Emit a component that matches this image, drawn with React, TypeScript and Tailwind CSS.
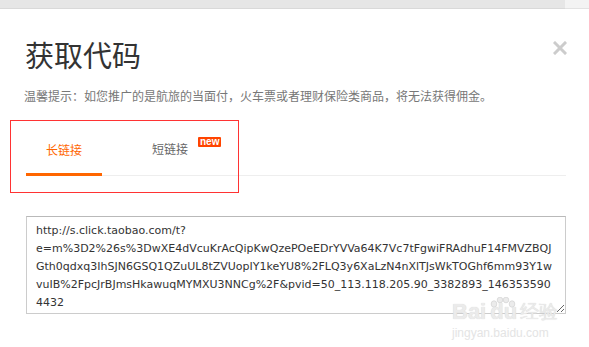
import React from "react";

const url =
  "http://s.click.taobao.com/t?\n" +
  "e=m%3D2%26s%3DwXE4dVcuKrAcQipKwQzePOeEDrYVVa64K7Vc7tFgwiFRAdhuF14FMVZBQJ\n" +
  "Gth0qdxq3IhSJN6GSQ1QZuUL8tZVUopIY1keYU8%2FLQ3y6XaLzN4nXlTJsWkTOGhf6mm93Y1w\n" +
  "vuIB%2FpcJrBJmsHkawuqMYMXU3NNCg%2F&pvid=50_113.118.205.90_3382893_146353590\n" +
  "4432";

const cjk = "font-['Microsoft_YaHei','Noto_Sans_CJK_SC',sans-serif]";

export default function App() {
  return (
    <div className={`relative w-[589px] h-[347px] overflow-hidden bg-white ${cjk}`}>
      {/* browser strip at the top */}
      <div className="flex h-[9px]">
        <div className="flex-1 bg-[#e6e6e6] border-b border-[#d9d9d9]" />
        <div className="w-[24px] bg-[#f3f3f3] border-b border-[#e2e2e2]" />
      </div>

      <div className="pl-[26px] pr-[23px]">
        <div className="relative mt-[31px]">
          <h1 className="text-[29px] leading-[29px] text-[#333] font-normal -ml-[1px]">获取代码</h1>
          <button className="absolute right-[-2px] top-[0px] w-[16px] h-[16px] flex items-center justify-center">
            <svg width="14" height="14" viewBox="0 0 14 14">
              <path d="M2 2 L12 12 M12 2 L2 12" stroke="#cccccc" strokeWidth="3" strokeLinecap="square" />
            </svg>
          </button>
        </div>

        <p className="mt-[21px] text-[12px] leading-[12px] text-[#777] -ml-[2px]">
          温馨提示：如您推广的是航旅的当面付，火车票或者理财保险类商品，将无法获得佣金。
        </p>

        {/* tabs */}
        <div className="mt-[41px] flex items-end border-b border-[#eeeeee]">
          <div className="px-[20px] pb-[17px] border-b-[3px] border-[#ff6600] -mb-[1px] text-[12px] leading-[12px] text-[#ff6600]">
            长链接
          </div>
          <div className="relative ml-[30px] px-[20px] pb-[20px] text-[12px] leading-[12px] text-[#666]">
            短链接
            <span className="absolute left-[66px] top-[-6px] h-[10px] px-[2px] rounded-[1px] bg-[#ff4400] text-white text-[10px] leading-[10px] font-['Liberation_Sans',sans-serif] font-bold">
              new
            </span>
          </div>
        </div>

        <textarea
          readOnly
          value={url}
          className="mt-[40px] block w-[540px] h-[98px] border border-[#cccccc] border-t-[#b9b9b9] pl-[9px] pr-[4px] pt-[5px] text-[11px] leading-[18px] text-[#333] whitespace-pre overflow-hidden font-['Tahoma','DejaVu_Sans',sans-serif] outline-none"
        />
      </div>

      {/* annotation box */}
      <div className="absolute left-[10px] top-[120px] w-[229px] h-[73px] border border-[#ff3333]" />

      {/* watermark */}
      <div className="absolute left-[452px] top-[297px] pointer-events-none select-none">
        <div className="flex items-end gap-[1px] text-[#ebebeb] [text-shadow:0_0_1px_#cfcfcf] font-['Liberation_Sans',sans-serif] font-bold text-[22px] leading-[19px]">
          <span>Bai</span>
          <span className="relative inline-block w-[32px] h-[24px]">
            <svg width="32" height="24" viewBox="0 0 32 24" className="absolute left-0 top-0">
              <ellipse cx="7" cy="7" rx="2.8" ry="3.2" fill="#ebebeb" stroke="#d6d6d6" strokeWidth="0.8" />
              <ellipse cx="13" cy="3" rx="2.8" ry="2.8" fill="#ebebeb" stroke="#d6d6d6" strokeWidth="0.8" />
              <ellipse cx="19" cy="3" rx="2.8" ry="2.8" fill="#ebebeb" stroke="#d6d6d6" strokeWidth="0.8" />
              <ellipse cx="25" cy="7" rx="2.8" ry="3.2" fill="#ebebeb" stroke="#d6d6d6" strokeWidth="0.8" />
            </svg>
            <span className="absolute left-[3px] bottom-0">du</span>
          </span>
          <span className="text-[19px] font-normal">经验</span>
        </div>
        <div className="mt-[6px] text-[12px] leading-[12px] text-[#e4e4e4] font-['Liberation_Sans',sans-serif]">
          jingyan.baidu.com
        </div>
      </div>
    </div>
  );
}
